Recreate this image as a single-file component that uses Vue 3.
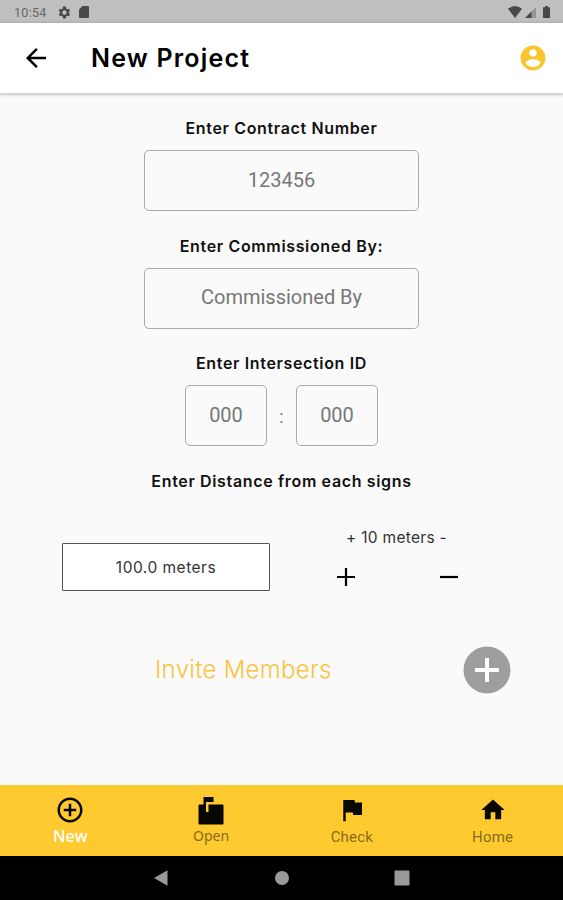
<template>
  <div class="screen">
    <div class="status">
      <span class="clock">10:54</span>
      <svg class="gear" viewBox="0 0 24 24"><path fill-rule="evenodd" d="M20.400 13c.1-.7.1-1.300 0-2l2.100-1.600-2-3.500-2.500 1a7.300 7.300 0 0 0-1.700-1L16 3.200l-.2-.7h-4.600l-.6 3.400c-.600.200-1.200.600-1.700 1l-2.500-1-2 3.500L6.500 11c-.1.700-.1 1.300 0 2l-2.100 1.600 2 3.500 2.500-1c.500.400 1.100.800 1.700 1l.600 3.400h4.600l.5-3.400c.600-.200 1.200-.600 1.700-1l2.500 1 2-3.500zM13.500 8.500a3.500 3.500 0 1 1 0 7 3.500 3.500 0 0 1 0-7z" /></svg>
      <svg class="sd" viewBox="0 0 10 12"><path d="M3.500 0H9a1 1 0 0 1 1 1v10a1 1 0 0 1-1 1H1a1 1 0 0 1-1-1V3.500z" /></svg>
      <span class="spacer"></span>
      <svg class="wifi" viewBox="0 0 14 12"><path d="M0 2.800Q7-2.600 14 2.800L7 12z" /></svg>
      <svg class="signal" viewBox="0 0 11 11"><path opacity=".35" d="M0 11 11 0v11z" /><path d="M0 11 6.500 4.500V11z" /></svg>
      <svg class="battery" viewBox="0 0 7 12"><path d="M2 0h3v1.300h2V12H0V1.300h2z" /></svg>
    </div>

    <header class="appbar">
      <svg class="back" viewBox="0 0 24 24"><path d="M20 11H7.830l5.590-5.590L12 4l-8 8 8 8 1.410-1.410L7.830 13H20z" /></svg>
      <h1>New Project</h1>
      <span class="spacer"></span>
      <svg class="account" viewBox="0 0 24 24"><path d="M12 2C6.480 2 2 6.480 2 12s4.480 10 10 10 10-4.480 10-10S17.520 2 12 2zm0 3c1.660 0 3 1.340 3 3s-1.340 3-3 3-3-1.340-3-3 1.340-3 3-3zm0 14.200c-2.500 0-4.710-1.280-6-3.220.030-1.990 4-3.080 6-3.080s5.970 1.090 6 3.080c-1.290 1.940-3.500 3.220-6 3.220z" /></svg>
    </header>

    <main>
      <div class="field">
        <label>Enter Contract Number</label>
        <div class="box"><span>123456</span></div>
      </div>
      <div class="field">
        <label>Enter Commissioned By:</label>
        <div class="box"><span>Commissioned By</span></div>
      </div>
      <div class="field">
        <label>Enter Intersection ID</label>
        <div class="pair">
          <div class="box small"><span>000</span></div>
          <span class="colon">:</span>
          <div class="box small"><span>000</span></div>
        </div>
      </div>
      <label>Enter Distance from each signs</label>

      <div class="distance">
        <div class="meters"><span>100.0 meters</span></div>
        <div class="stepper">
          <div class="step-label">+ 10 meters -</div>
          <div class="step-buttons">
            <svg viewBox="0 0 18 18"><path d="M7.900 0h2.200v7.900H18v2.200h-7.900V18H7.900v-7.900H0V7.900h7.900z" /></svg>
            <svg viewBox="0 0 18 18"><path d="M0 7.900h18v2.200H0z" /></svg>
          </div>
        </div>
      </div>

      <div class="invite">
        <span>Invite Members</span>
        <svg viewBox="0 0 48 48"><circle cx="24" cy="24" r="23.500" fill="#9e9e9e" /><path d="M22 12h4v10h10v4H26v10h-4V26H12v-4h10z" fill="#fff" /></svg>
      </div>
    </main>

    <nav>
      <div v-for="t in tabs" :key="t.name" class="tab" :class="t.name.toLowerCase()">
        <svg viewBox="0 0 24 24"><path :d="t.icon" /></svg>
        <span>{{ t.name }}</span>
      </div>
    </nav>

    <div class="system">
      <svg viewBox="0 0 16 16"><path d="M0 8 13.500.300v15.400z" /></svg>
      <svg viewBox="0 0 16 16"><circle cx="8" cy="8" r="7" /></svg>
      <svg viewBox="0 0 16 16"><rect x=".5" y=".5" width="15" height="15" rx="1" /></svg>
    </div>
  </div>
</template>

<script setup>
const tabs = [
  { name: 'New', icon: 'M13 7h-2v4H7v2h4v4h2v-4h4v-2h-4V7zm-1-5C6.480 2 2 6.480 2 12s4.480 10 10 10 10-4.480 10-10S17.520 2 12 2zm0 18c-4.410 0-8-3.590-8-8s3.590-8 8-8 8 3.590 8 8-3.590 8-8 8z' },
  { name: 'Open', icon: 'M21 6H10v6H8V4h6V0H6v6H3c-.6 0-1 .4-1 1v14c0 .6.4 1 1 1h18c.6 0 1-.4 1-1V7c0-.6-.4-1-1-1z' },
  { name: 'Check', icon: 'M14.400 6 14 4H5v17h2v-7h5.600l.400 2h7V6z' },
  { name: 'Home', icon: 'M10 20v-6h4v6h5v-8h3L12 3 2 12h3v8z' },
]
</script>

<style>
body { background: #fafafa; overflow: hidden; }
</style>

<style scoped>
.screen {
  width: 563px; height: 900px; display: flex; flex-direction: column;
  background: #fafafa; color: #111; font-family: Roboto, "Noto Sans", sans-serif;
}
.screen *, .screen { box-sizing: border-box; }
svg { display: block; flex-shrink: 0; }
span, label, h1 { white-space: nowrap; }
.spacer { flex: 1; }

.status { height: 23px; background: #bfbfbf; display: flex; align-items: center; padding: 1px 13px 0 14px; fill: #484848; }
.clock { font-size: 12.500px; letter-spacing: 0.300px; color: #666; width: 42px; }
.gear { width: 15px; height: 15px; }
.sd { width: 10px; height: 12px; margin-left: 8px; }
.wifi { width: 14px; height: 12px; }
.signal { width: 11px; height: 11px; margin-left: 3px; }
.battery { width: 7px; height: 12px; margin-left: 7px; }

.appbar {
  height: 70px; background: #fff; display: flex; align-items: center; padding: 0 15px 0 21px;
  box-shadow: 0 1px 3px 1px rgba(0, 0, 0, 0.200); flex-shrink: 0; z-index: 1;
}
.back { width: 30px; height: 30px; }
h1 { margin: 0 0 0 40px; font: 600 25px/30px Inter, sans-serif; letter-spacing: 1.200px; color: #000; }
.account { width: 30px; height: 30px; fill: #fbc52d; }

main { flex: 1; display: flex; flex-direction: column; align-items: center; padding-top: 25px; }
.field { display: flex; flex-direction: column; align-items: center; height: 117.500px; }
label { font: 600 16px/20px Inter, sans-serif; letter-spacing: 0.650px; }
.box {
  width: 275px; height: 61px; margin-top: 12px; border: 1px solid #aaa; border-radius: 5px;
  display: flex; align-items: center; justify-content: center; padding-bottom: 2px;
  font-size: 20px; color: #777;
}
.pair { display: flex; align-items: center; }
.small { width: 82px; }
.colon { width: 29px; text-align: center; font-size: 18px; color: #777; padding-top: 13px; }

.distance { width: 100%; display: flex; padding: 31px 0 0 62px; }
.meters {
  width: 208px; height: 48px; margin-top: 21px; border: 1.500px solid #555; border-radius: 1px; background: #fff;
  display: flex; align-items: center; justify-content: center; color: #333; padding-top: 1px;
}
.meters, .step-label { font-family: Inter, sans-serif; font-size: 15.500px; letter-spacing: 0.500px; }
.stepper { width: 126px; margin-left: 66px; }
.step-label { line-height: 20px; color: #333; margin-top: 6px; padding-left: 10px; letter-spacing: 0.300px; white-space: nowrap; }
.step-buttons { display: flex; justify-content: space-between; padding: 20px 4px 0 1px; }
.step-buttons svg { width: 18px; height: 18px; }

.invite { width: 100%; display: flex; align-items: center; justify-content: space-between; padding: 55px 52px 0 155px; }
.invite span { font: 300 24px/30px Inter, sans-serif; color: #fbc23c; letter-spacing: 0.300px; }
.invite svg { width: 48px; height: 48px; }

nav { height: 71px; background: #ffca2f; display: flex; }
.tab { flex: 1; display: flex; flex-direction: column; align-items: center; padding-top: 10px; font-size: 15px; color: #866a19; }
.tab svg { width: 30px; height: 30px; fill: #080800; }
.tab span { line-height: 20px; margin-top: 2px; letter-spacing: 0.200px; }
.new span { color: #fff; font: 500 16px/20px "Noto Sans", sans-serif; margin-top: 1px; }
.open { padding-top: 12px; }
.open span { font: 14px/20px "Noto Sans", sans-serif; margin-top: -1px; letter-spacing: 0; }
.home svg { width: 28px; height: 28px; margin: 1px 0; }

.system { height: 44px; background: #000; display: flex; align-items: center; justify-content: center; gap: 104px; fill: #999; }
.system svg { width: 16px; height: 16px; }
</style>
